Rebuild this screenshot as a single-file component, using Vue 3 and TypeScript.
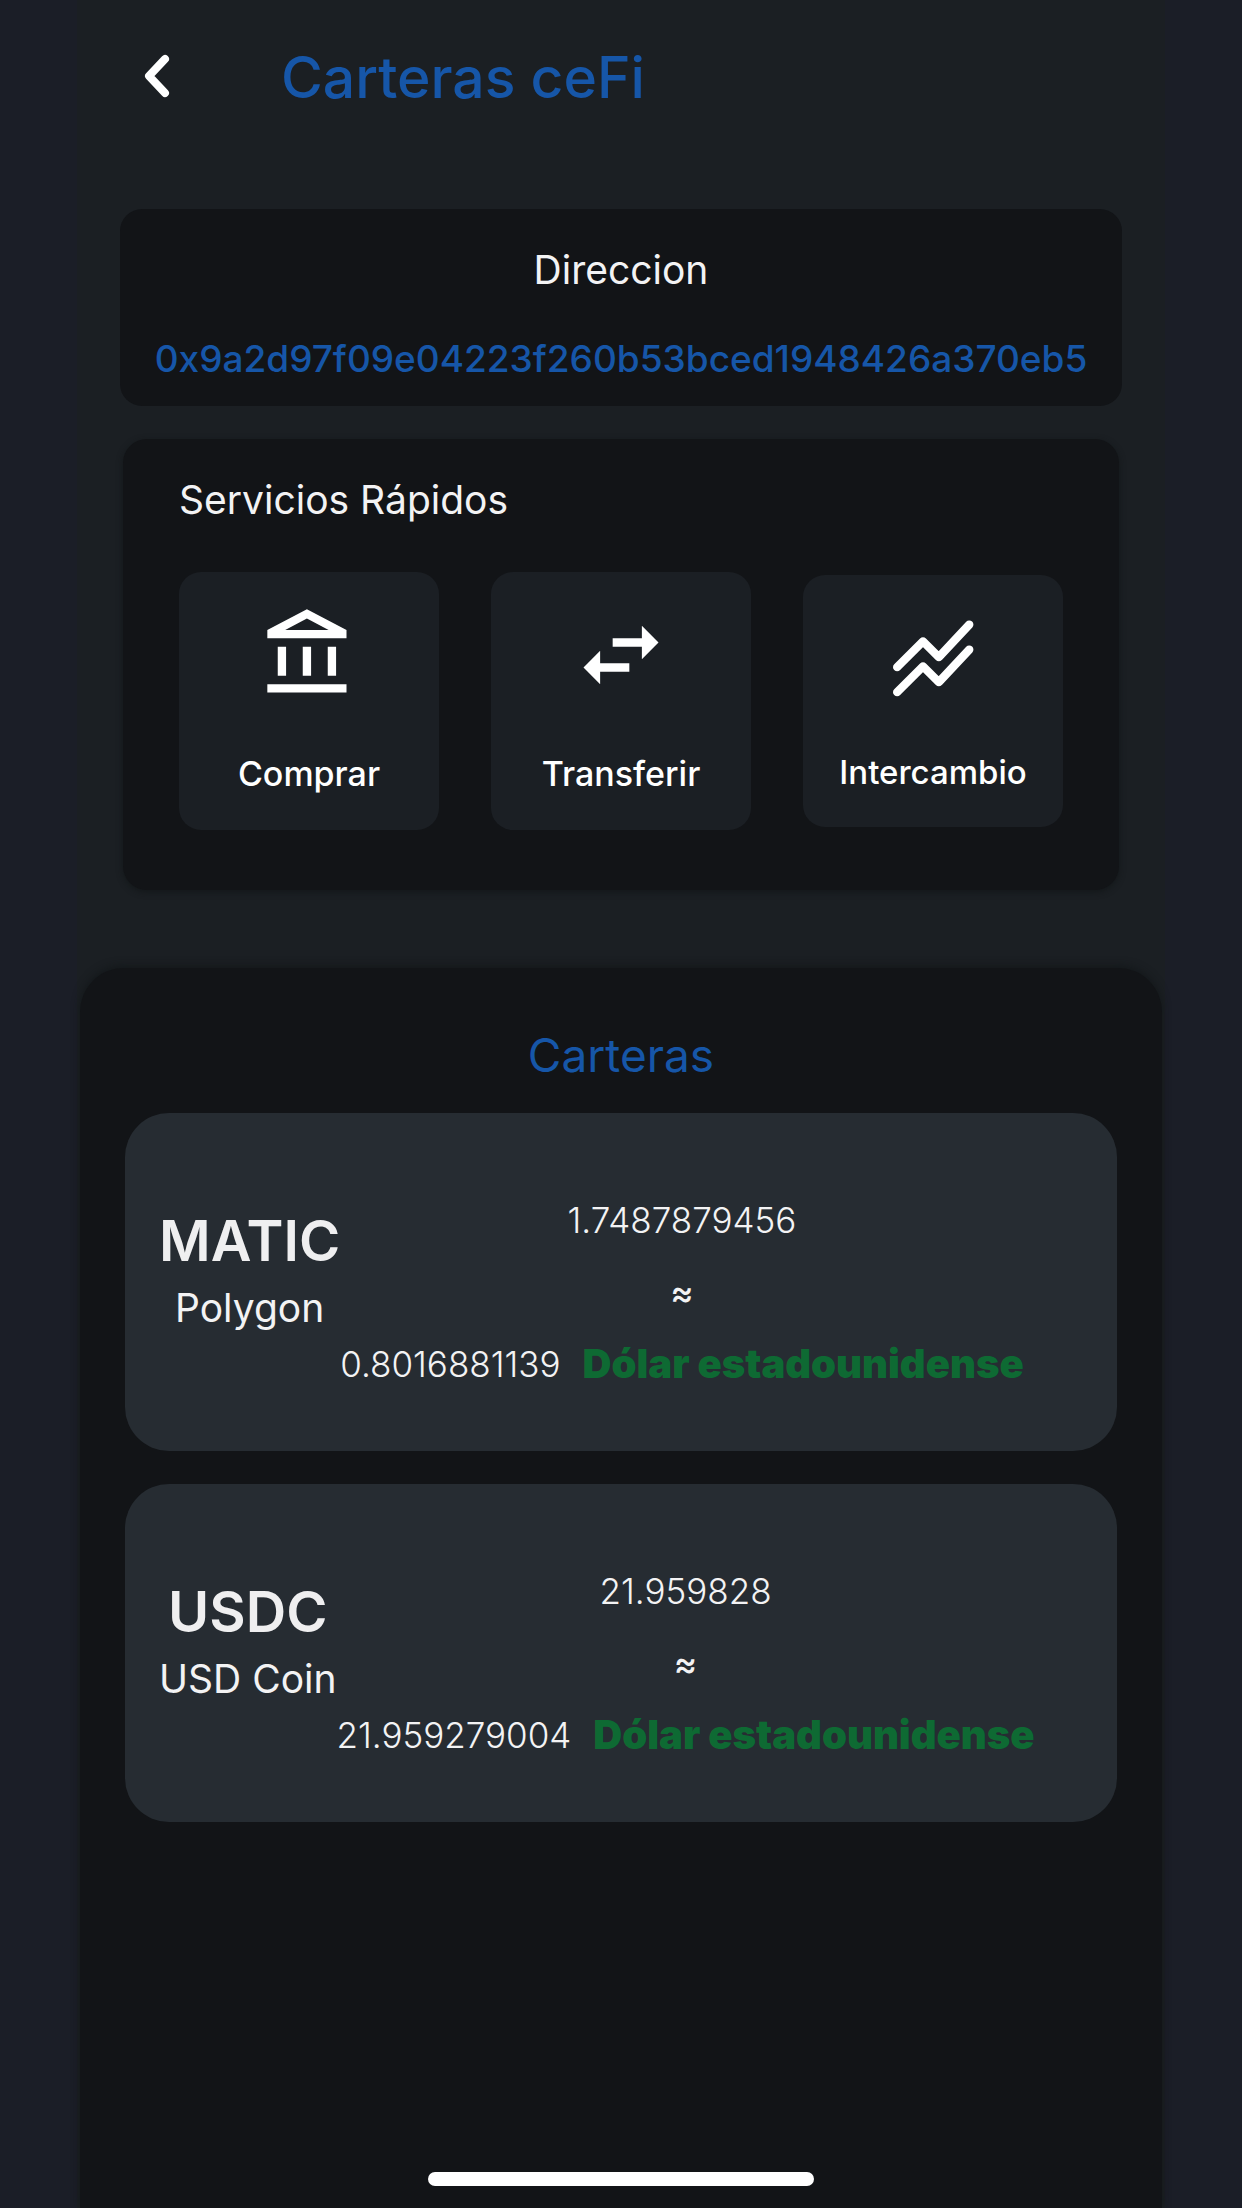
<script setup lang="ts">
interface Wallet {
  symbol: string
  name: string
  amount: string
  value: string
  currency: string
}

const address = '0x9a2d97f09e04223f260b53bced1948426a370eb5'

const wallets: Wallet[] = [
  {
    symbol: 'MATIC',
    name: 'Polygon',
    amount: '1.7487879456',
    value: '0.8016881139',
    currency: 'Dólar estadounidense',
  },
  {
    symbol: 'USDC',
    name: 'USD Coin',
    amount: '21.959828',
    value: '21.959279004',
    currency: 'Dólar estadounidense',
  },
]
</script>

<template>
  <div class="page">
    <main class="screen">
      <header class="top-bar">
        <button class="back" type="button" aria-label="Volver">
          <svg viewBox="0 0 48 48" aria-hidden="true">
            <path d="M32 5 L16 22 L32 39" />
          </svg>
        </button>
        <h1>Carteras ceFi</h1>
      </header>

      <section class="address-card">
        <h2>Direccion</h2>
        <p class="address">{{ address }}</p>
      </section>

      <section class="services">
        <h2>Servicios Rápidos</h2>
        <div class="tiles">
          <button class="tile" type="button">
            <svg viewBox="0 0 24 24" aria-hidden="true">
              <path
                d="M6.5 10h-2v7h2v-7zm6 0h-2v7h2v-7zm8.5 9H2v2h19v-2zm-2.5-9h-2v7h2v-7zm-7-6.74L16.71 6H6.29l5.21-2.74m0-2.26L2 6v2h19V6l-9.5-5z"
              />
            </svg>
            <span>Comprar</span>
          </button>
          <button class="tile" type="button">
            <svg viewBox="0 0 24 24" aria-hidden="true">
              <path
                d="M6.99 11L3 15l3.99 4v-3H14v-2H6.99v-3zM21 9l-3.99-4v3H10v2h7.01v3L21 9z"
              />
            </svg>
            <span>Transferir</span>
          </button>
          <button class="tile tile-compact" type="button">
            <svg class="line-icon" viewBox="0 0 24 24" aria-hidden="true">
              <path d="M3.4 14.2 L9.6 8 L13.4 11.8 L20.7 4" />
              <path d="M3.4 20.2 L9.6 14 L13.4 17.8 L20.7 10" />
            </svg>
            <span>Intercambio</span>
          </button>
        </div>
      </section>

      <section class="wallets">
        <h2>Carteras</h2>
        <article v-for="wallet in wallets" :key="wallet.symbol" class="wallet">
          <div class="coin">
            <h3>{{ wallet.symbol }}</h3>
            <p>{{ wallet.name }}</p>
          </div>
          <div class="balance">
            <span>{{ wallet.amount }}</span>
            <span class="approx">≈</span>
            <span class="value">
              <span>{{ wallet.value }}</span>
              <strong>{{ wallet.currency }}</strong>
            </span>
          </div>
        </article>
        <div class="home-indicator"></div>
      </section>
    </main>
  </div>
</template>

<style>
body {
  background: #1b1e27;
}
</style>

<style scoped>
.page {
  font-family: Inter, "Liberation Sans", sans-serif;
  color: #f3f3f4;
  padding: 0 77px;
}

.screen {
  box-sizing: border-box;
  min-height: 100vh;
  display: flex;
  flex-direction: column;
  background: #1b1f23;
}

h1,
h2,
h3,
p {
  margin: 0;
  font-weight: 400;
}

button {
  border: 0;
  padding: 0;
  font: inherit;
  color: #fff;
  cursor: pointer;
}

.top-bar {
  display: flex;
  align-items: center;
  gap: 100px;
  padding: 43px 56px 0;
}

.back {
  width: 48px;
  height: 68px;
  background: none;
}

.back svg {
  display: block;
  width: 48px;
  height: 48px;
  margin: 10px 0;
}

.back path {
  fill: none;
  stroke: #fff;
  stroke-width: 8;
  stroke-linecap: round;
  stroke-linejoin: round;
}

h1 {
  font-size: 57px;
  line-height: 70px;
  font-weight: 500;
  color: #1656a8;
}

.address-card {
  margin: 96px 43px 0;
  padding: 37px 0 10px;
  border-radius: 22px;
  background: #121417;
  text-align: center;
}

h2 {
  font-size: 39px;
  line-height: 48px;
}

.address {
  margin-top: 28px;
  font-size: 37px;
  line-height: 74px;
  font-weight: 500;
  white-space: nowrap;
  color: #1656a8;
}

.services {
  margin: 33px 46px 0;
  padding: 37px 56px 60px;
  border-radius: 24px;
  background: #121417;
  box-shadow: 0 2px 6px rgba(15, 20, 22, 0.7);
}

.tiles {
  display: flex;
  align-items: center;
  gap: 52px;
  margin-top: 48px;
}

.tile {
  flex: 1;
  min-width: 0;
  display: flex;
  flex-direction: column;
  align-items: center;
  gap: 46px;
  padding: 33px 0;
  border-radius: 22px;
  background: #1b1f24;
  font-size: 34px;
  line-height: 46px;
  font-weight: 500;
}

.tile-compact {
  gap: 44px;
  padding-bottom: 35px;
  font-size: 33px;
  line-height: 40px;
}

.tile svg {
  width: 100px;
  height: 100px;
  fill: #fff;
}

.tile .line-icon {
  fill: none;
  stroke: #fff;
  stroke-width: 2;
  stroke-linecap: round;
  stroke-linejoin: round;
}

.wallets {
  flex: 1;
  display: flex;
  flex-direction: column;
  margin: 78px 3px 0;
  padding: 59px 45px 22px;
  border-radius: 44px 44px 0 0;
  background: #121417;
  box-shadow: 0 -2px 8px rgba(15, 20, 22, 0.7);
}

.wallets h2 {
  margin-bottom: 30px;
  font-size: 46px;
  line-height: 56px;
  text-align: center;
  color: #1656a8;
}

.wallet {
  display: flex;
  align-items: center;
  margin-bottom: 33px;
  padding: 71px 34px 51px;
  border-radius: 44px;
  background: #262c32;
}

.coin {
  padding-bottom: 36px;
  text-align: center;
  white-space: nowrap;
}

h3 {
  font-size: 56px;
  line-height: 68px;
  font-weight: 600;
  color: #efeff0;
}

.coin p {
  font-size: 39px;
  line-height: 66px;
}

.balance {
  display: flex;
  flex-direction: column;
  align-items: center;
  font-size: 35px;
  line-height: 72px;
  font-weight: 300;
  white-space: nowrap;
}

.approx {
  font-weight: 500;
}

.value {
  display: flex;
  gap: 22px;
}

.value strong {
  font-size: 40px;
  font-weight: 900;
  color: #0e6a33;
}

.home-indicator {
  align-self: center;
  width: 386px;
  height: 14px;
  margin-top: auto;
  border-radius: 7px;
  background: #fff;
}
</style>
